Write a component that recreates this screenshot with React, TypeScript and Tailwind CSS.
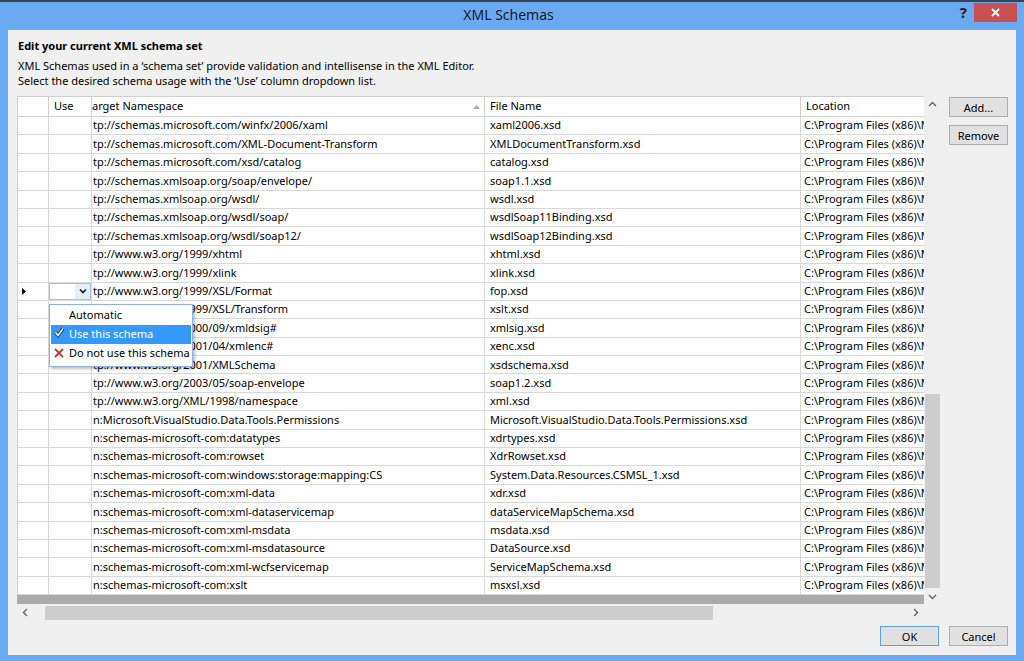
import React from "react";

const rows: [string, string][] = [
  ["tp://schemas.microsoft.com/winfx/2006/xaml", "xaml2006.xsd"],
  ["tp://schemas.microsoft.com/XML-Document-Transform", "XMLDocumentTransform.xsd"],
  ["tp://schemas.microsoft.com/xsd/catalog", "catalog.xsd"],
  ["tp://schemas.xmlsoap.org/soap/envelope/", "soap1.1.xsd"],
  ["tp://schemas.xmlsoap.org/wsdl/", "wsdl.xsd"],
  ["tp://schemas.xmlsoap.org/wsdl/soap/", "wsdlSoap11Binding.xsd"],
  ["tp://schemas.xmlsoap.org/wsdl/soap12/", "wsdlSoap12Binding.xsd"],
  ["tp://www.w3.org/1999/xhtml", "xhtml.xsd"],
  ["tp://www.w3.org/1999/xlink", "xlink.xsd"],
  ["tp://www.w3.org/1999/XSL/Format", "fop.xsd"],
  ["tp://www.w3.org/1999/XSL/Transform", "xslt.xsd"],
  ["tp://www.w3.org/2000/09/xmldsig#", "xmlsig.xsd"],
  ["tp://www.w3.org/2001/04/xmlenc#", "xenc.xsd"],
  ["tp://www.w3.org/2001/XMLSchema", "xsdschema.xsd"],
  ["tp://www.w3.org/2003/05/soap-envelope", "soap1.2.xsd"],
  ["tp://www.w3.org/XML/1998/namespace", "xml.xsd"],
  ["n:Microsoft.VisualStudio.Data.Tools.Permissions", "Microsoft.VisualStudio.Data.Tools.Permissions.xsd"],
  ["n:schemas-microsoft-com:datatypes", "xdrtypes.xsd"],
  ["n:schemas-microsoft-com:rowset", "XdrRowset.xsd"],
  ["n:schemas-microsoft-com:windows:storage:mapping:CS", "System.Data.Resources.CSMSL_1.xsd"],
  ["n:schemas-microsoft-com:xml-data", "xdr.xsd"],
  ["n:schemas-microsoft-com:xml-dataservicemap", "dataServiceMapSchema.xsd"],
  ["n:schemas-microsoft-com:xml-msdata", "msdata.xsd"],
  ["n:schemas-microsoft-com:xml-msdatasource", "DataSource.xsd"],
  ["n:schemas-microsoft-com:xml-wcfservicemap", "ServiceMapSchema.xsd"],
  ["n:schemas-microsoft-com:xslt", "msxsl.xsd"],
];

const LOC = "C:\\Program Files (x86)\\Microsoft Visual Studio 12.0\\Xml\\Schemas";

function Chev({ d }: { d: string }) {
  return (
    <svg width="9" height="9" viewBox="0 0 9 9">
      <polyline points={d} fill="none" stroke="#606060" strokeWidth="1.3" />
    </svg>
  );
}

export default function App() {
  return (
    <div className="w-[1024px] h-[661px] bg-[#69aaf3] flex flex-col font-['Segoe_UI','Noto_Sans',sans-serif] text-[11px] text-black overflow-hidden">
      <div className="h-[2px] bg-[#39424f]" />

      {/* title bar */}
      <div className="h-[28px] flex items-start">
        <div className="flex-1" />
        <div className="text-[14px] leading-[26px] text-[#1a1a1a]">XML Schemas</div>
        <div className="flex-1 flex justify-end items-start pr-[7px]">
          <span className="text-[15px] font-bold leading-[20px] mr-[7px] text-[#222]">?</span>
          <div className="w-[43px] h-[19px] mt-[1px] bg-[#c75050] flex items-center justify-center">
            <svg width="9" height="9" viewBox="0 0 9 9">
              <path d="M1 1 L8 8 M8 1 L1 8" stroke="white" strokeWidth="1.8" />
            </svg>
          </div>
        </div>
      </div>

      {/* client area */}
      <div className="mx-[8px] h-[625px] bg-[#f0f0f0] flex flex-col pl-[9px]">
        <div className="pl-[1px] pt-[8px] font-bold leading-[15px]">Edit your current XML schema set</div>
        <div className="pl-[1px] mt-[5px] leading-[15px]">
          <div>XML Schemas used in a &lsquo;schema set&rsquo; provide validation and intellisense in the XML Editor.</div>
          <div>Select the desired schema usage with the &lsquo;Use&rsquo; column dropdown list.</div>
        </div>

        <div className="mt-[8px] flex">
          {/* grid */}
          <div className="w-[923px] h-[524px] flex">
            <div className="w-[907px] flex flex-col">
              {/* header */}
              <div className="h-[21px] flex border-t border-b border-l border-[#d0d0d0] bg-white">
                <div className="w-[31px] shrink-0 border-r border-[#d0d0d0]" />
                <div className="w-[43px] shrink-0 border-r border-[#d0d0d0] pl-[5px] flex items-center">Use</div>
                <div className="w-[393px] shrink-0 border-r border-[#d0d0d0] flex items-center justify-between pr-[4px] whitespace-nowrap">
                  <span>arget Namespace</span>
                  <svg width="7" height="4" viewBox="0 0 7 4"><polygon points="0,4 3.5,0 7,4" fill="#a8a8a8" /></svg>
                </div>
                <div className="w-[316px] shrink-0 border-r border-[#d0d0d0] pl-[5px] flex items-center">File Name</div>
                <div className="flex-1 pl-[5px] flex items-center">Location</div>
              </div>

              {/* rows */}
              <div className="relative border-l border-[#d0d0d0]">
                {rows.map(([ns, file], i) => (
                  <div key={i} className="h-[18.4px] flex border-b border-[#d8d8d8] bg-white">
                    <div className="w-[31px] shrink-0 border-r border-[#d8d8d8] flex items-center pl-[4px]">
                      {i === 9 && (
                        <svg width="4" height="7" viewBox="0 0 4 7"><polygon points="0,0 4,3.5 0,7" fill="#000" /></svg>
                      )}
                    </div>
                    <div className="w-[43px] shrink-0 border-r border-[#d8d8d8] flex">
                      {i === 9 && (
                        <div className="flex-1 flex border border-[#9fc3ea] bg-white">
                          <div className="flex-1" />
                          <div className="w-[15px] bg-[#e3eef9] flex items-center justify-center">
                            <svg width="8" height="6" viewBox="0 0 8 6">
                              <polyline points="1,1.5 4,4.5 7,1.5" fill="none" stroke="#222" strokeWidth="1.7" />
                            </svg>
                          </div>
                        </div>
                      )}
                    </div>
                    <div className="w-[393px] shrink-0 border-r border-[#d8d8d8] pl-[1px] flex items-center whitespace-nowrap overflow-hidden">{ns}</div>
                    <div className="w-[316px] shrink-0 border-r border-[#d8d8d8] pl-[5px] flex items-center whitespace-nowrap overflow-hidden">{file}</div>
                    <div className="flex-1 pl-[3px] flex items-center whitespace-nowrap overflow-hidden">{LOC}</div>
                  </div>
                ))}

                {/* dropdown list */}
                <div className="absolute top-[187px] left-[31px] w-[144px] h-[63px] bg-white border border-[#93b1dc] shadow-[2px_2px_3px_rgba(0,0,0,0.25)] flex flex-col py-[0.5px] whitespace-nowrap">
                  <div className="h-[19px] flex items-center pl-[19px]">Automatic</div>
                  <div className="h-[19px] mx-[1px] bg-[#3399ff] text-white flex items-center">
                    <svg width="11" height="11" viewBox="0 0 11 11" className="ml-[3px] mr-[4px] -mt-[4px]">
                      <path d="M1.5 5.5 L4 8.5 L9 1.5" fill="none" stroke="#1d2b3a" strokeWidth="3.2" />
                      <path d="M1.5 5.5 L4 8.5 L9 1.5" fill="none" stroke="#ffffff" strokeWidth="1.6" />
                    </svg>
                    <span>Use this schema</span>
                  </div>
                  <div className="h-[19px] flex items-center">
                    <svg width="10" height="10" viewBox="0 0 10 10" className="ml-[4px] mr-[5px]">
                      <path d="M1 1 L9 9 M9 1 L1 9" stroke="#c0392b" strokeWidth="1.8" />
                    </svg>
                    <span>Do not use this schema</span>
                  </div>
                </div>
              </div>

              <div className="flex-1 bg-[#ababab]" />

              {/* horizontal scrollbar */}
              <div className="h-[16px] flex">
                <div className="w-[17px] flex items-center justify-center"><Chev d="6,1 2.5,4.5 6,8" /></div>
                <div className="flex-1 pl-[11px] pt-[2px]">
                  <div className="w-[668px] h-[14px] bg-[#cdcdcd]" />
                </div>
                <div className="w-[17px] flex items-center justify-center"><Chev d="3,1 6.5,4.5 3,8" /></div>
              </div>
            </div>

            {/* vertical scrollbar */}
            <div className="w-[16px] flex flex-col">
              <div className="h-[17px] flex items-center justify-center"><Chev d="1,6 4.5,2.5 8,6" /></div>
              <div className="flex-1 flex flex-col justify-end pl-[1px]">
                <div className="h-[194px] bg-[#cdcdcd]" />
              </div>
              <div className="h-[16px] flex items-center justify-center"><Chev d="1,3 4.5,6.5 8,3" /></div>
              <div className="h-[16px]" />
            </div>
          </div>

          {/* side buttons */}
          <div className="ml-[9px] flex flex-col gap-[8px] mt-[1px]">
            <button className="w-[59px] h-[20px] bg-[#e1e1e1] border border-[#adadad] leading-none">Add...</button>
            <button className="w-[59px] h-[20px] bg-[#e1e1e1] border border-[#adadad] leading-none">Remove</button>
          </div>
        </div>

        {/* bottom buttons */}
        <div className="mt-[6px] flex justify-end gap-[10px] pr-[8px]">
          <button className="w-[59px] h-[20px] bg-[#e1e1e1] border border-[#5d9fe3] leading-none">OK</button>
          <button className="w-[59px] h-[20px] bg-[#e1e1e1] border border-[#adadad] leading-none">Cancel</button>
        </div>
      </div>
    </div>
  );
}
